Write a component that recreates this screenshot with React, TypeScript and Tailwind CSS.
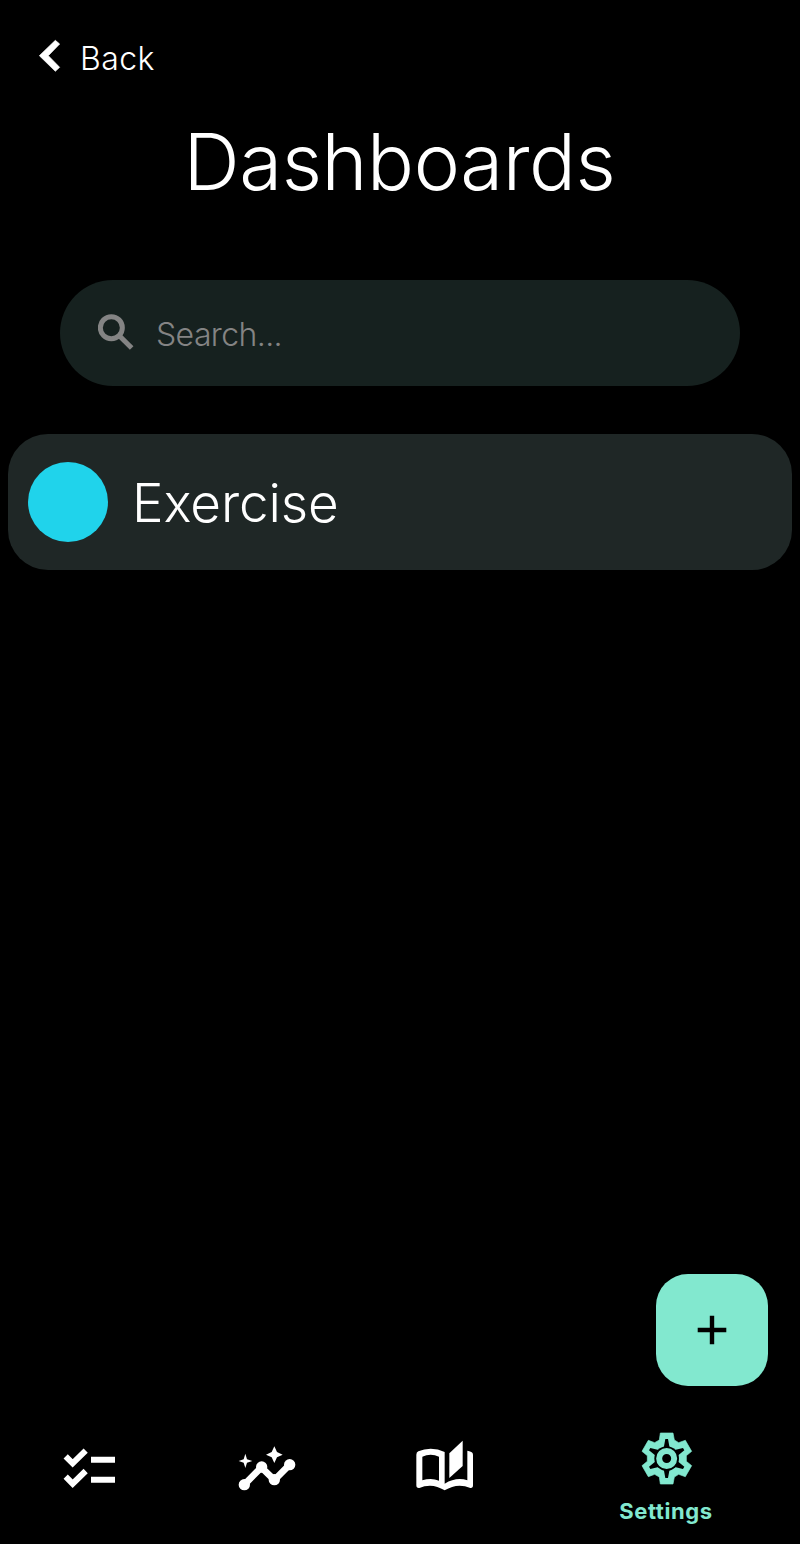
import React from "react";

function ChevronLeft() {
  return (
    <svg className="-mt-1.5 h-[42px] w-[30px] shrink-0" viewBox="0 0 90 126">
      <path d="M64 19L77 30L43 65L77 100L64 112L16 65Z" fill="#fff" stroke="#fff" strokeWidth="2" strokeLinejoin="round" />
    </svg>
  );
}

function SearchIcon() {
  return (
    <svg className="-mt-0.5 h-9 w-9 shrink-0" viewBox="0 0 108 108" fill="none" stroke="#848484">
      <circle cx="40" cy="41" r="33" strokeWidth="15" />
      <path d="M64 65L101 102" strokeWidth="15" />
    </svg>
  );
}

function ChecklistIcon() {
  return (
    <svg className="h-20 w-20" viewBox="0 0 240 240" fill="none" stroke="#fff">
      <path d="M47 79L68 100L107 62M47 140L68 161L107 123" strokeWidth="18" />
      <path d="M123 89.500H195M123 149.500H195" strokeWidth="18" />
    </svg>
  );
}

function InsightsIcon() {
  return (
    <svg className="h-20 w-20" viewBox="0 0 240 240" fill="#fff">
      <path d="M58 164L109 112L148 150L194 104" fill="none" stroke="#fff" strokeWidth="20" />
      <circle cx="58" cy="164" r="17" />
      <circle cx="110" cy="111" r="17" />
      <circle cx="148" cy="149" r="17" />
      <circle cx="194" cy="104" r="17" />
      <path d="M148 49L156 66L173 74L156 82L148 99L140 82L123 74L140 66Z" />
      <path d="M61 71L66 88L82 93L66 98L61 114L56 98L41 93L56 88Z" />
    </svg>
  );
}

function BookIcon() {
  return (
    <svg className="h-20 w-20" viewBox="0 0 240 240" fill="#fff">
      <path
        fillRule="evenodd"
        d="M34 74Q34 67 40 64Q57 56 77 56Q99 56 119 66V161Q142 147 164 147Q176 147 187 151V62Q193 63 199 66Q204 68 204 74V166Q204 175 196 174Q180 167 164 167Q141 167 119 181Q97 167 75 167Q58 167 43 174Q34 175 34 166ZM52 80V151Q64 147 77 147Q90 147 102 152V80Q90 74 77 74Q64 74 52 80Z"
      />
      <path d="M133 70L173 32V108L133 144Z" />
    </svg>
  );
}

function GearIcon() {
  return (
    <svg className="h-[60px] w-[60px]" viewBox="0 0 180 180">
      <path
        d="M73 15H111L115 36L128 44L148 37L167 70L151 83V100L167 113L148 146L128 139L115 147L111 168H73L70 147L56 139L37 146L18 113L34 100V83L18 70L37 37L56 44L70 36Z"
        fill="#82e8cf"
        stroke="#82e8cf"
        strokeWidth="2"
        strokeLinejoin="round"
      />
      <circle cx="92" cy="91.500" r="37" fill="#000" />
      <path
        d="M88 33H96L101 60H83ZM88 150H96L101 123H83ZM141 60L145 67L124 84L113 67ZM141 123L145 116L124 99L113 116ZM43 60L39 67L60 84L71 67ZM43 123L39 116L60 99L71 116Z"
        fill="#000"
      />
      <circle cx="92" cy="91.500" r="22.500" fill="none" stroke="#82e8cf" strokeWidth="18" />
    </svg>
  );
}

function PlusIcon() {
  return (
    <svg className="h-[30px] w-[30px]" viewBox="0 0 30 30" stroke="#000" strokeWidth="4.400">
      <path d="M15 0.700V29.300M0.700 15H29.300" />
    </svg>
  );
}

export default function App() {
  return (
    <div className="flex h-[1544px] w-[800px] flex-col bg-black font-['Inter','Liberation_Sans',sans-serif] text-white">
      <header className="flex h-[116px] items-center pl-[34px]">
        <button className="flex items-center gap-4">
          <ChevronLeft />
          <span className="mt-[2px] text-[32px] leading-10 font-light tracking-[0.4px]">Back</span>
        </button>
      </header>
      <h1 className="h-[164px] pt-1 pr-px text-center text-[78px] leading-[84px] font-light tracking-[-0.4px]">
        Dashboards
      </h1>
      <label className="mx-[60px] flex h-[106px] items-center gap-[22px] rounded-full bg-[#16211f] pl-[38px]">
        <SearchIcon />
        <input
          className="mt-1 w-[500px] bg-transparent text-[32px] font-light tracking-[-0.6px] outline-none placeholder:text-[#848484] placeholder:opacity-100"
          placeholder="Search..."
        />
      </label>
      <main className="mx-2 mt-12 flex-1">
        <div className="flex h-[136px] items-center gap-6 rounded-[40px] bg-[#1f2726] pl-5">
          <span className="h-20 w-20 rounded-full bg-[#20d3eb]" />
          <span className="mt-[2px] text-[53px] leading-[64px] font-light tracking-[-0.1px]">Exercise</span>
        </div>
      </main>
      <div className="flex justify-end pr-8 pb-6">
        <button aria-label="Add" className="flex h-28 w-28 items-center justify-center rounded-[32px] bg-[#82e8cf]">
          <PlusIcon />
        </button>
      </div>
      <nav className="flex h-[134px] pt-5 pl-[50px]">
        <div className="w-[175px]"><ChecklistIcon /></div>
        <div className="w-[180px]"><InsightsIcon /></div>
        <div className="w-[195px]"><BookIcon /></div>
        <div className="flex w-[132px] flex-col items-center text-[#82e8cf]">
          <div className="-mt-0.5"><GearIcon /></div>
          <span className="mt-[9px] text-[22px] leading-7 font-bold tracking-[0.6px]">Settings</span>
        </div>
      </nav>
    </div>
  );
}
